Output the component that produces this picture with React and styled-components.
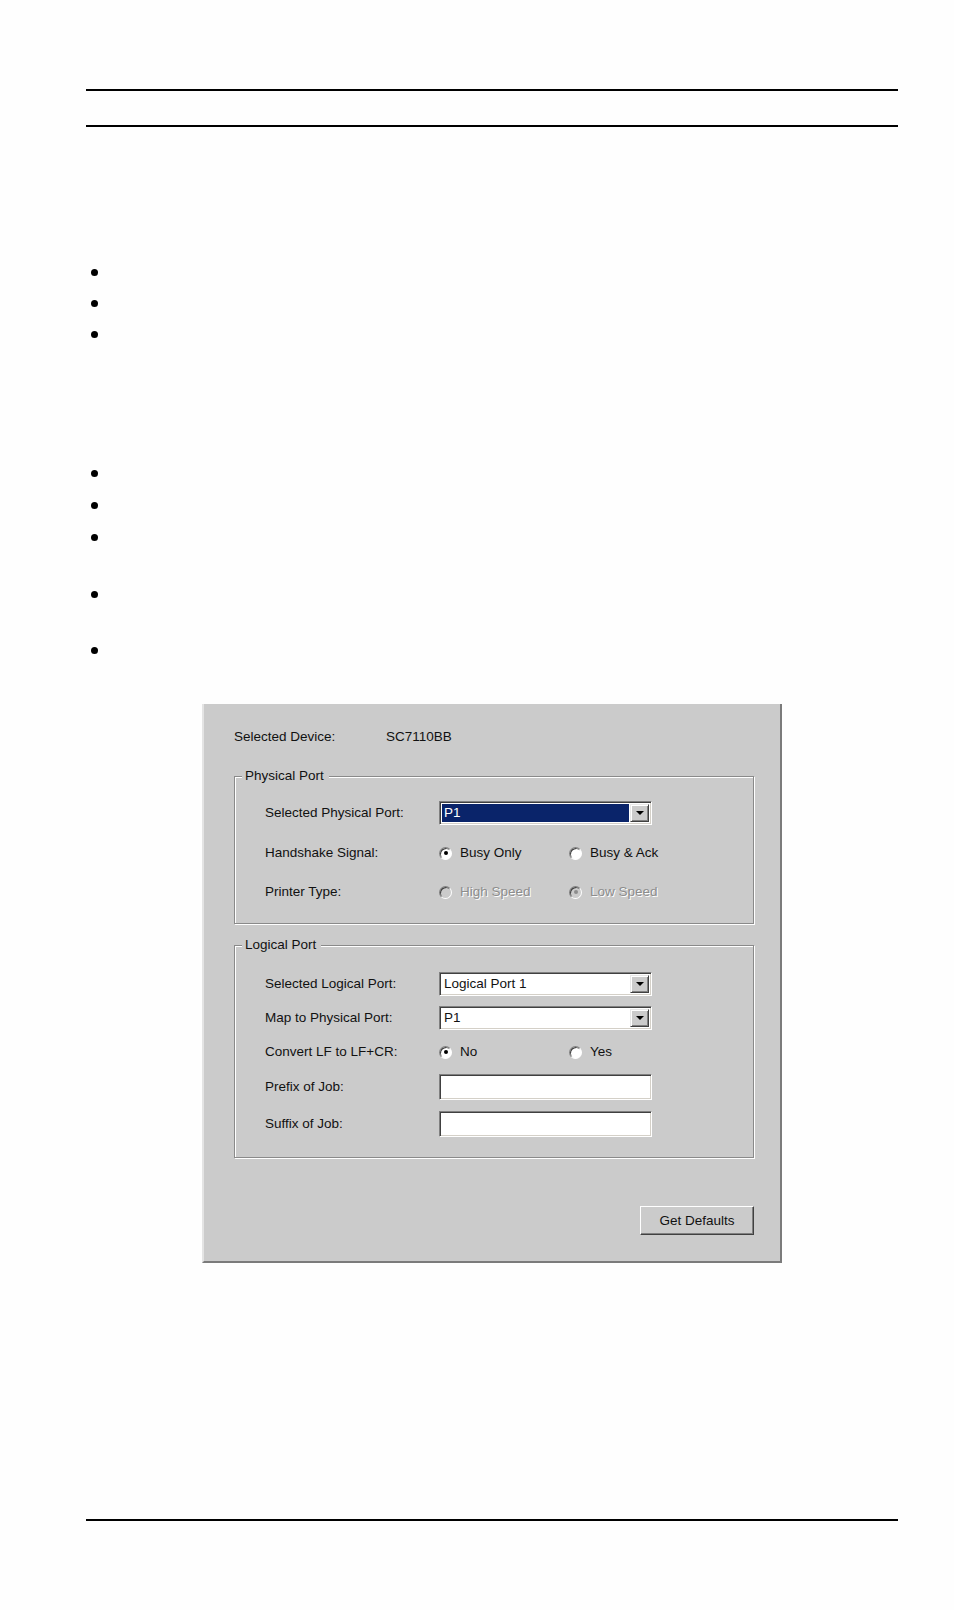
import React from 'react';
import styled, { createGlobalStyle } from 'styled-components';

const GlobalStyle = createGlobalStyle`
  html, body {
    margin: 0;
    padding: 0;
    background: #fefefe;
  }
  body {
    font-family: "Liberation Sans", Arial, sans-serif;
  }
`;

const Page = styled.div`
  width: 954px;
  min-height: 1610px;
  box-sizing: border-box;
  padding: 89px 56px 0 86px;
  display: flex;
  flex-direction: column;
`;

const Rule = styled.div`
  height: 2px;
  background: #000;
  margin-top: ${({ $top }) => $top || 0}px;
`;

const BulletList = styled.ul`
  list-style: none;
  margin: ${({ $top }) => $top}px 0 0;
  padding: 0;
`;

const Item = styled.li`
  position: relative;
  height: ${({ $h }) => $h}px;

  &::before {
    content: '';
    position: absolute;
    left: 5px;
    top: 12px;
    width: 7px;
    height: 7px;
    border-radius: 50%;
    background: #000;
  }
`;

const Dialog = styled.div`
  margin: 37px 0 0 116px;
  width: 580px;
  height: 559px;
  box-sizing: border-box;
  background: #cbcbcb;
  border-left: 2px solid #e4e4e4;
  border-right: 2px solid #7b7b7b;
  border-bottom: 2px solid #7b7b7b;
  padding: 25px 26px 0 30px;
  font-size: 13.5px;
  line-height: 16px;
  color: #111;
  display: flex;
  flex-direction: column;
`;

const DeviceRow = styled.div`
  display: flex;
  align-items: center;
  height: 16px;
`;

const DeviceLabel = styled.span`
  width: 152px;
  flex: none;
`;

const GroupBox = styled.div`
  position: relative;
  margin-top: ${({ $top }) => $top}px;
  border: 1px solid #8a8a8a;
  box-shadow: 1px 1px 0 #fff, inset 1px 1px 0 #fff;
  padding: ${({ $pt }) => $pt}px 0 ${({ $pb }) => $pb}px 30px;
  display: flex;
  flex-direction: column;
`;

const Legend = styled.span`
  position: absolute;
  top: -9px;
  left: 7px;
  padding: 0 5px 0 3px;
  background: #cbcbcb;
`;

const Row = styled.div`
  display: flex;
  align-items: center;
  height: ${({ $h }) => $h || 24}px;
  margin-top: ${({ $top }) => $top || 0}px;
`;

const Label = styled.span`
  width: 174px;
  flex: none;
`;

const Combo = styled.div`
  width: 213px;
  height: 24px;
  box-sizing: border-box;
  display: flex;
  background: #fff;
  border: 1px solid;
  border-color: #808080 #fff #fff #808080;
  box-shadow: inset 1px 1px 0 #404040, inset -1px -1px 0 #d4d0c8;
  padding: 2px;
`;

const ComboText = styled.span`
  flex: 1;
  margin-right: 1px;
  padding-left: 2px;
  line-height: 18px;
  background: ${({ $selected }) => ($selected ? '#0a246a' : '#fff')};
  color: ${({ $selected }) => ($selected ? '#fff' : '#111')};
`;

const DropButton = styled.span`
  width: 19px;
  height: 18px;
  box-sizing: border-box;
  flex: none;
  display: flex;
  align-items: center;
  justify-content: center;
  background: #cbcbcb;
  border: 1px solid;
  border-color: #e8e8e8 #404040 #404040 #e8e8e8;
  box-shadow: inset 1px 1px 0 #fff, inset -1px -1px 0 #808080;
`;

const TextBox = styled.div`
  width: 213px;
  height: 26px;
  box-sizing: border-box;
  background: #fff;
  border: 1px solid;
  border-color: #808080 #fff #fff #808080;
  box-shadow: inset 1px 1px 0 #404040, inset -1px -1px 0 #d4d0c8;
`;

const Option = styled.span`
  display: flex;
  align-items: center;
  width: ${({ $w }) => $w || 130}px;
  color: ${({ $disabled }) => ($disabled ? '#8d8d8d' : '#111')};
  text-shadow: ${({ $disabled }) => ($disabled ? '1px 1px 0 #fff' : 'none')};
`;

const RadioCircle = styled.span`
  position: relative;
  width: 13px;
  height: 13px;
  flex: none;
  margin-right: 8px;
  border-radius: 50%;
  box-sizing: border-box;
  border: 1px solid;
  border-color: #808080 #fff #fff #808080;
  box-shadow: inset 1px 1px 0 #404040;
  background: ${({ $disabled }) => ($disabled ? '#cbcbcb' : '#fff')};

  &::after {
    content: '';
    display: ${({ $checked }) => ($checked ? 'block' : 'none')};
    position: absolute;
    left: 3.5px;
    top: 3.5px;
    width: 4px;
    height: 4px;
    border-radius: 50%;
    background: ${({ $disabled }) => ($disabled ? '#8d8d8d' : '#000')};
  }
`;

const ButtonRow = styled.div`
  display: flex;
  justify-content: flex-end;
  margin-top: 48px;
`;

const Button = styled.span`
  width: 114px;
  height: 29px;
  box-sizing: border-box;
  display: flex;
  align-items: center;
  justify-content: center;
  background: #cbcbcb;
  border: 1px solid;
  border-color: #fff #404040 #404040 #fff;
  box-shadow: inset -1px -1px 0 #808080;
`;

const Arrow = () => (
  <svg width="8" height="4" viewBox="0 0 8 4">
    <path d="M0 0 H8 L4 4 Z" fill="#000" />
  </svg>
);

const Select = ({ value, selected }) => (
  <Combo>
    <ComboText $selected={selected}>{value}</ComboText>
    <DropButton>
      <Arrow />
    </DropButton>
  </Combo>
);

const Radio = ({ label, checked, disabled, width }) => (
  <Option $disabled={disabled} $w={width}>
    <RadioCircle $checked={checked} $disabled={disabled} />
    {label}
  </Option>
);

const App = () => {
  return (
    <Page>
      <GlobalStyle />
      <Rule />
      <Rule $top={34} />

      <BulletList $top={130}>
        <Item $h={31} />
        <Item $h={31} />
        <Item $h={31} />
      </BulletList>

      <BulletList $top={108}>
        <Item $h={32} />
        <Item $h={32} />
        <Item $h={57} />
        <Item $h={56} />
        <Item $h={32} />
      </BulletList>

      <Dialog>
        <DeviceRow>
          <DeviceLabel>Selected Device:</DeviceLabel>
          <span>SC7110BB</span>
        </DeviceRow>

        <GroupBox $top={31} $pt={24} $pb={19}>
          <Legend>Physical Port</Legend>
          <Row>
            <Label>Selected Physical Port:</Label>
            <Select value="P1" selected />
          </Row>
          <Row $top={16}>
            <Label>Handshake Signal:</Label>
            <Radio label="Busy Only" checked />
            <Radio label="Busy &amp; Ack" />
          </Row>
          <Row $top={15}>
            <Label>Printer Type:</Label>
            <Radio label="High Speed" disabled />
            <Radio label="Low Speed" checked disabled />
          </Row>
        </GroupBox>

        <GroupBox $top={21} $pt={26} $pb={20}>
          <Legend>Logical Port</Legend>
          <Row>
            <Label>Selected Logical Port:</Label>
            <Select value="Logical Port 1" />
          </Row>
          <Row $top={10}>
            <Label>Map to Physical Port:</Label>
            <Select value="P1" />
          </Row>
          <Row $top={10}>
            <Label>Convert LF to LF+CR:</Label>
            <Radio label="No" checked />
            <Radio label="Yes" />
          </Row>
          <Row $top={10} $h={26}>
            <Label>Prefix of Job:</Label>
            <TextBox />
          </Row>
          <Row $top={11} $h={26}>
            <Label>Suffix of Job:</Label>
            <TextBox />
          </Row>
        </GroupBox>

        <ButtonRow>
          <Button>Get Defaults</Button>
        </ButtonRow>
      </Dialog>

      <Rule $top={256} />
    </Page>
  );
};

export default App;
